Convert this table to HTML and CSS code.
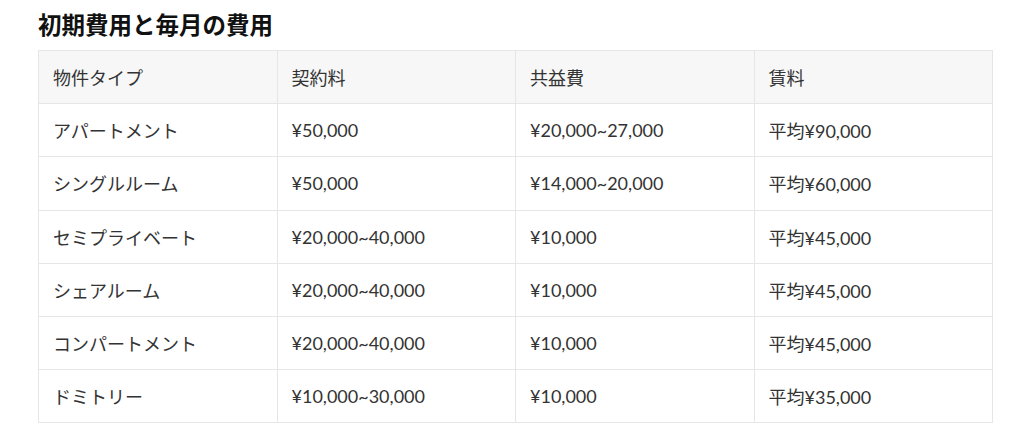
FILE: index.html
```html
<!DOCTYPE html>
<html lang="ja">
<head>
<meta charset="utf-8">
<link rel="stylesheet" href="styles.css">
</head>
<body>
<div class="wrap">
  <h2 class="title">初期費用と毎月の費用</h2>
  <table class="cost">
    <thead>
      <tr><th>物件タイプ</th><th>契約料</th><th>共益費</th><th>賃料</th></tr>
    </thead>
    <tbody>
      <tr><td>アパートメント</td><td>¥50,000</td><td>¥20,000~27,000</td><td>平均¥90,000</td></tr>
      <tr><td>シングルルーム</td><td>¥50,000</td><td>¥14,000~20,000</td><td>平均¥60,000</td></tr>
      <tr><td>セミプライベート</td><td>¥20,000~40,000</td><td>¥10,000</td><td>平均¥45,000</td></tr>
      <tr><td>シェアルーム</td><td>¥20,000~40,000</td><td>¥10,000</td><td>平均¥45,000</td></tr>
      <tr><td>コンパートメント</td><td>¥20,000~40,000</td><td>¥10,000</td><td>平均¥45,000</td></tr>
      <tr><td>ドミトリー</td><td>¥10,000~30,000</td><td>¥10,000</td><td>平均¥35,000</td></tr>
    </tbody>
  </table>
</div>
</body>
</html>
```
FILE: styles.css
```css
html, body {
  margin: 0;
  padding: 0;
  background: #fff;
}
body {
  font-family: Lato, "Noto Sans CJK JP", sans-serif;
  color: #333;
}
.wrap {
  padding: 11px 31px 0 38px;
}
.title {
  margin: 0 0 10px;
  font-size: 23.5px;
  line-height: 29px;
  font-weight: 700;
  color: #111;
}
.cost {
  width: 955px;
  border-collapse: collapse;
  table-layout: fixed;
  font-size: 18px;
}
.cost th, .cost td {
  border: 1px solid #e6e6e6;
  height: 52.2px;
  padding: 0 14px;
  text-align: left;
  vertical-align: middle;
  font-weight: 400;
}
.cost thead th {
  background: #f7f7f7;
}
```
